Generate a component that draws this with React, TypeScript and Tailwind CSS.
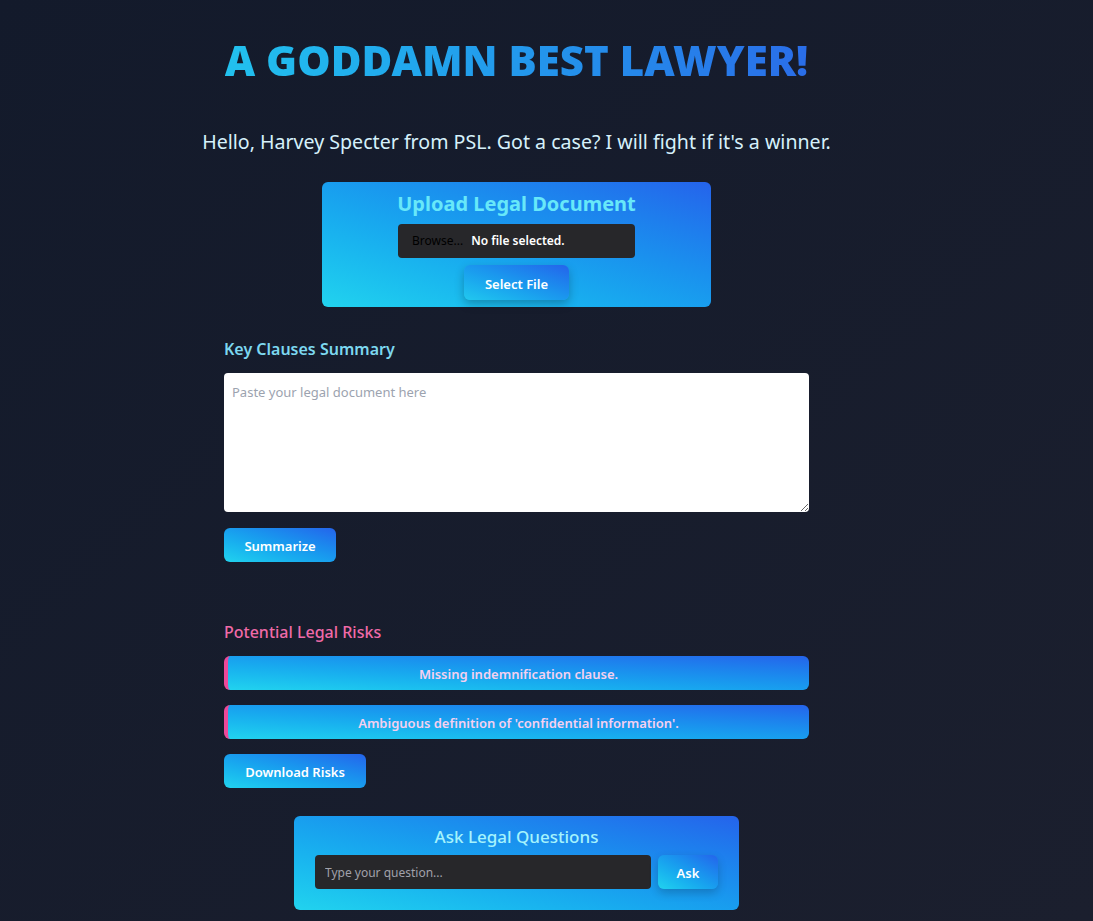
import React, { useState } from "react";

export default function App() {
  const [text, setText] = useState("");
  const [question, setQuestion] = useState("");
  const risks = [
    "Missing indemnification clause.",
    "Ambiguous definition of 'confidential information'.",
  ];

  return (
    <div className="min-h-[921px] w-full bg-linear-to-br from-[#131a2b] to-[#1b1f2e] font-['Noto_Sans',sans-serif]">
      <div className="w-[1033px] flex flex-col items-center pt-[34px]">
        {/* Title */}
        <h1 className="text-[42px] leading-[52px] font-black bg-linear-to-r from-[#22c1ee] to-[#2a6de8] bg-clip-text text-transparent">
          A GODDAMN BEST LAWYER!
        </h1>

        <p className="mt-[42px] text-[19.6px] leading-[28px] text-[#d6f1fb]">
          Hello, Harvey Specter from PSL. Got a case? I will fight if it's a winner.
        </p>

        {/* Upload */}
        <div className="mt-[26px] w-[389px] h-[125px] rounded-md bg-linear-to-tr from-[#22d3ee] to-[#2563eb] flex flex-col items-center pt-[8px]">
          <h2 className="text-[20px] leading-[28px] font-bold text-[#67e8f9]">
            Upload Legal Document
          </h2>
          <div className="mt-[6px] w-[237px] h-[34px] rounded bg-[#27272a] flex items-center pl-[14px] text-[12px]">
            <span className="text-black">Browse...</span>
            <span className="ml-[8px] text-white font-semibold">No file selected.</span>
          </div>
          <button className="mt-[7px] w-[105px] h-[35px] pt-[4px] rounded-md bg-linear-to-tr from-[#22c8ee] to-[#2563eb] text-white text-[13px] font-semibold shadow-[0_4px_10px_rgba(0,0,0,0.25)]">
            Select File
          </button>
        </div>

        {/* Summary */}
        <div className="mt-[30px] w-[585px] flex flex-col items-start">
          <h3 className="text-[16px] leading-[24px] font-semibold text-[#7dd8f0]">
            Key Clauses Summary
          </h3>
          <textarea
            value={text}
            onChange={(e) => setText(e.target.value)}
            placeholder="Paste your legal document here"
            className="mt-[12px] w-[585px] h-[139px] rounded-sm bg-white px-[8px] py-[10px] text-[13px] text-gray-800 placeholder:text-[#9ca3af] outline-none resize"
          />
          <button className="mt-[16px] w-[112px] h-[34px] pt-[4px] rounded-md bg-linear-to-tr from-[#22d3ee] to-[#2563eb] text-white text-[13px] font-semibold">
            Summarize
          </button>

          {/* Risks */}
          <h3 className="mt-[58px] text-[16px] leading-[24px] font-medium text-[#f06aa8]">
            Potential Legal Risks
          </h3>
          <div className="mt-[12px] w-full flex flex-col gap-[15px]">
            {risks.map((r) => (
              <div
                key={r}
                className="h-[34px] w-full pt-[4px] rounded-md border-l-[4px] border-[#ec4899] bg-linear-to-tr from-[#22d3ee] to-[#2563eb] flex items-center justify-center text-[13px] font-semibold text-[#f5d0f0]"
              >
                {r}
              </div>
            ))}
          </div>
          <button className="mt-[15px] w-[142px] h-[34px] pt-[4px] rounded-md bg-linear-to-tr from-[#22d3ee] to-[#2563eb] text-white text-[13px] font-semibold">
            Download Risks
          </button>
        </div>

        {/* Ask */}
        <div className="mt-[28px] w-[445px] h-[94px] rounded-md bg-linear-to-tr from-[#22d3ee] to-[#2563eb] flex flex-col items-center pt-[8px]">
          <h2 className="text-[17px] leading-[26px] font-medium text-[#a5f3fc]">
            Ask Legal Questions
          </h2>
          <div className="mt-[5px] flex gap-[7px]">
            <input
              value={question}
              onChange={(e) => setQuestion(e.target.value)}
              placeholder="Type your question..."
              className="w-[336px] h-[34px] rounded bg-[#27272a] px-[10px] text-[12px] text-white placeholder:text-[#a1a1aa] outline-none"
            />
            <button className="w-[60px] h-[34px] pt-[3px] rounded-md bg-linear-to-tr from-[#22d3ee] to-[#2563eb] text-white text-[13px] font-semibold shadow-[0_4px_10px_rgba(0,0,0,0.2)]">
              Ask
            </button>
          </div>
        </div>
      </div>
    </div>
  );
}
